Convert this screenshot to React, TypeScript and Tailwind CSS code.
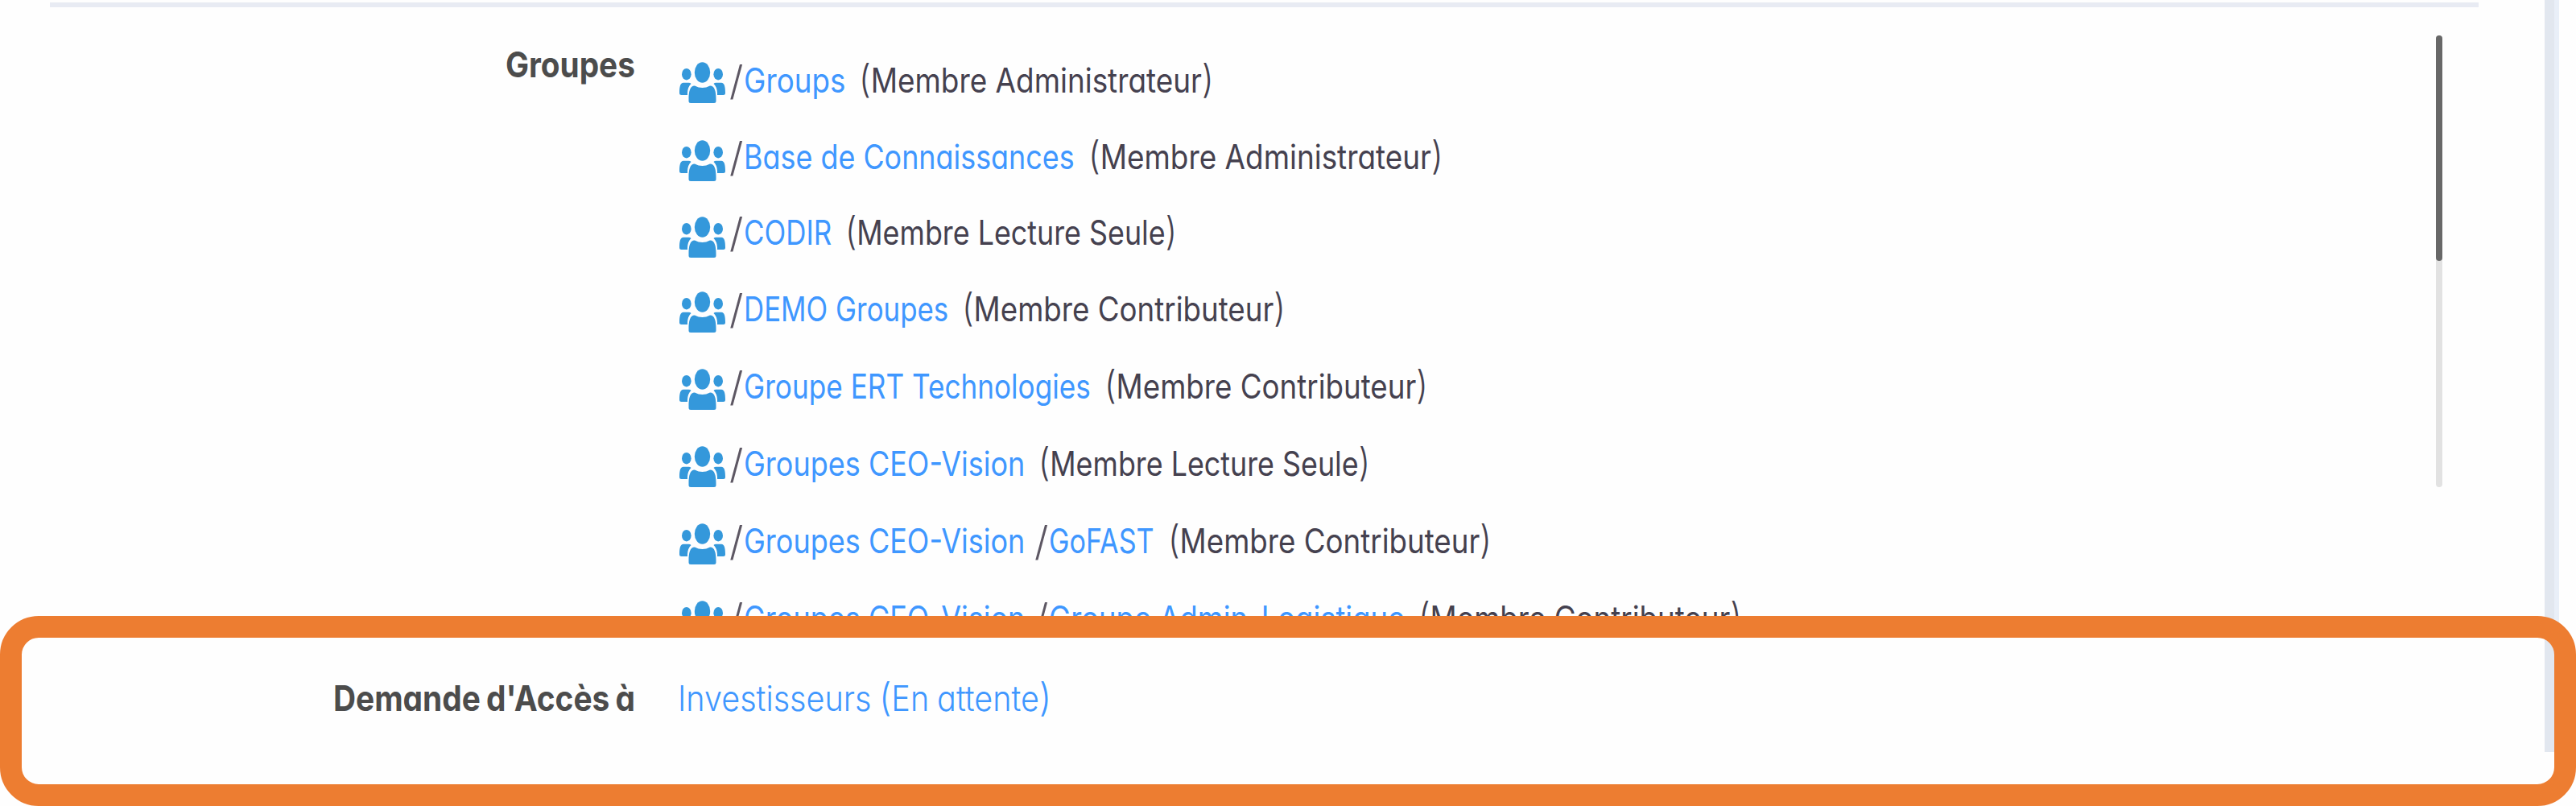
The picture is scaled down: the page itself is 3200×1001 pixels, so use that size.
import { useLayoutEffect, useRef, useState } from 'react';
import type { ReactNode } from 'react';

const BASE = 'font-[Inter,sans-serif] [font-feature-settings:"cv11","ss03"]';

/* Condenses a run of text horizontally so that it fills the given width. */
function Fit({ children, width, className = '' }: { children: ReactNode; width: number; className?: string }) {
  const ref = useRef<HTMLSpanElement>(null);
  const [scale, setScale] = useState(1);
  useLayoutEffect(() => {
    if (ref.current && ref.current.offsetWidth) setScale((width + 4) / ref.current.offsetWidth);
  }, [width]);
  return (
    <span className={'flex shrink-0 ' + className} style={{ width }}>
      <span
        ref={ref}
        className="-ml-[3px] block shrink-0 origin-left whitespace-nowrap"
        style={{ transform: `scaleX(${scale})` }}
      >
        {children}
      </span>
    </span>
  );
}

function UsersIcon({ className }: { className: string }) {
  return (
    <svg viewBox="0 0 57 52" className={'h-[52px] w-[57px] shrink-0 fill-[#3498db] ' + className}>
      <ellipse cx="28.5" cy="13" rx="9.700" ry="12.700" />
      <ellipse cx="8.800" cy="15.200" rx="5.800" ry="7.200" />
      <ellipse cx="48.200" cy="15.200" rx="5.800" ry="7.200" />
      <path d="M5 25.800h6.500q2 0 3 1.200Q10.200 31 10 38.500V41H2.500Q0 41 0 38.500C0 31 1 25.800 5 25.800Z" />
      <path d="M52 25.800h-6.500q-2 0-3 1.200Q46.800 31 47 38.500V41h7.500Q57 41 57 38.500C57 31 56 25.800 52 25.800Z" />
      <path d="M19 29.500Q28.500 34.500 38 29.500C44 29.500 45.500 37 45.500 46v2.500q0 2.500-2.500 2.500H14q-2.500 0-2.500-2.500V46C11.500 37 13 29.500 19 29.500Z" />
    </svg>
  );
}

type Segment = { name: string; width: number };
type Group = { path: Segment[]; role: string; roleWidth: number };

const ADMIN = 'Membre Administrateur';
const READER = 'Membre Lecture Seule';
const CONTRIB = 'Membre Contributeur';
const CEO: Segment = { name: 'Groupes CEO-Vision', width: 345 };

const groups: Group[] = [
  { path: [{ name: 'Groups', width: 122 }], role: ADMIN, roleWidth: 437 },
  { path: [{ name: 'Base de Connaissances', width: 407 }], role: ADMIN, roleWidth: 437 },
  { path: [{ name: 'CODIR', width: 105 }], role: READER, roleWidth: 408 },
  { path: [{ name: 'DEMO Groupes', width: 250 }], role: CONTRIB, roleWidth: 398 },
  { path: [{ name: 'Groupe ERT Technologies', width: 427 }], role: CONTRIB, roleWidth: 398 },
  { path: [CEO], role: READER, roleWidth: 408 },
  { path: [CEO, { name: 'GoFAST', width: 127 }], role: CONTRIB, roleWidth: 398 },
  { path: [CEO, { name: 'Groupe Admin-Logistique', width: 438 }], role: CONTRIB, roleWidth: 398 },
];

const ICON_OFFSETS = ['mt-[6px]', 'mt-[9px]', 'mt-[12px]'];

function GroupRow({ group, index }: { group: Group; index: number }) {
  return (
    <li className={'flex shrink-0 items-center ' + (index === 1 || index === 2 ? 'h-[94px]' : 'h-24')}>
      <UsersIcon className={ICON_OFFSETS[index] ?? 'mt-[7px]'} />
      {group.path.map((segment, i) => (
        <span key={segment.name} className={'flex items-center ' + (i ? 'ml-4' : 'ml-2')}>
          <Fit width={13} className="text-[50px] font-light text-[#5d5763]">
            /
          </Fit>
          <Fit width={segment.width} className="ml-[5px] text-[#3f97ff]">
            {segment.name}
          </Fit>
        </span>
      ))}
      <Fit width={group.roleWidth} className="ml-[21px] text-[#45414f]">
        <span className="text-[48px] leading-none font-light">(</span>
        {group.role}
        <span className="text-[48px] leading-none font-light">)</span>
      </Fit>
    </li>
  );
}

export default function App() {
  return (
    <div className={'relative flex h-[1001px] w-[3200px] overflow-hidden bg-[#fefefe] ' + BASE}>
      <main className="flex w-[3161px] flex-col">
        <div className="mt-[3px] ml-[62px] h-1.5 w-[3017px] shrink-0 bg-[#e8ebf3]" />
        <section className="flex h-[756px] shrink-0 overflow-hidden">
          <div className="flex w-[788px] justify-end pt-[42px] text-[44px] leading-[58px] font-bold text-[#4c4c4c]">
            <Fit width={157}>Groupes</Fit>
          </div>
          <ul className="ml-[56px] flex w-[2182px] flex-col pt-[43px] text-[42px] leading-[60px]">
            {groups.map((group, i) => (
              <GroupRow key={i} group={group} index={i} />
            ))}
          </ul>
          <div className="mt-[35px] h-[561px] w-2 rounded-full bg-[#e2e2e2]">
            <div className="h-[280px] rounded-full bg-[#686868]" />
          </div>
        </section>
        <section className="flex h-[236px] shrink-0 pt-[72px] text-[44px] leading-[60px]">
          <div className="flex w-[788px] justify-end font-bold text-[#4c4c4c] [word-spacing:-0.05em]">
            <Fit width={371}>Demande d'Accès à</Fit>
          </div>
          <Fit width={460} className="ml-[57px] font-[350] text-[#3f97ff] [word-spacing:-0.03em]">
            Investisseurs <span className="text-[48px] leading-none font-light">(</span>En attente
            <span className="text-[48px] leading-none font-light">)</span>
          </Fit>
        </section>
      </main>
      <div className="flex h-[934px]">
        <div className="w-3 bg-[#e2e7ef]" />
        <div className="w-1.5 bg-[#e9eff8]" />
      </div>
      <div className="absolute top-[765px] left-0 h-[236px] w-[3200px] rounded-[48px] border-[27px] border-[#ed7d31]" />
    </div>
  );
}
